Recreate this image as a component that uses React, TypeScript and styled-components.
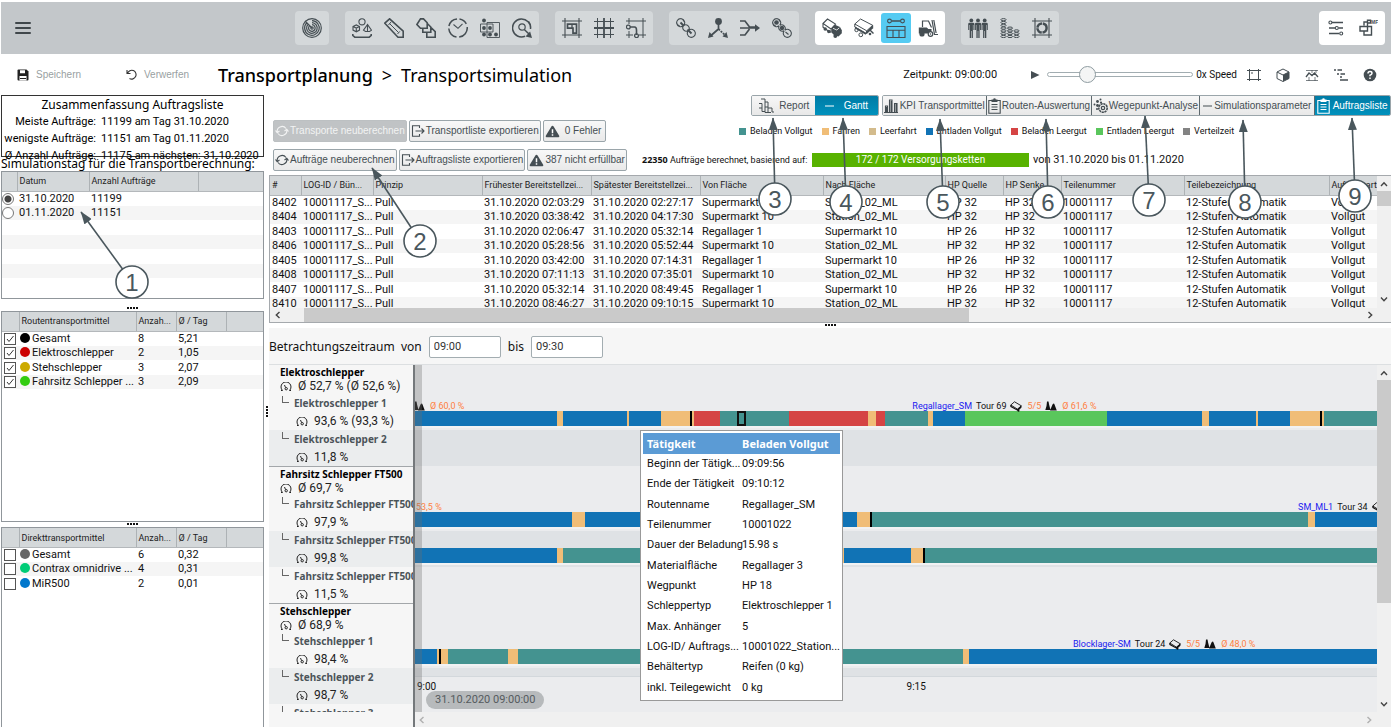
import React from "react";
import styled, { createGlobalStyle } from "styled-components";

const HEAD = `"Noto Sans", "Open Sans", sans-serif`;
const TEXT = `Roboto, "Noto Sans", sans-serif`;
const CTRL = `"Liberation Sans", Arial, sans-serif`;
const INK = "#454e53";

const COLORS = {
  load: "#449390",
  drive: "#f0bd77",
  empty: "#d3bb8c",
  unload: "#1173b5",
  loadEmpty: "#d54444",
  unloadEmpty: "#5ac65c",
  spread: "#838383",
  wait: "#000000",
};
type Kind = keyof typeof COLORS;

const Global = createGlobalStyle`
  *, *::before, *::after { box-sizing: border-box; }
  body { margin: 0; background: #fff; color: #111; font: 11px/14px ${TEXT}; }
  button, input { font-family: inherit; margin: 0; }
  svg { display: block; flex: none; }
`;

/* ---------- shell ---------- */

const Page = styled.div`
  position: relative;
  display: flex;
  flex-direction: column;
  height: 100vh;
  min-height: 600px;
  padding: 2px 1px 0;
  overflow: hidden;
`;

const TopBar = styled.header`
  display: flex;
  align-items: center;
  gap: 16px;
  height: 52px;
  flex: none;
  padding-right: 6px;
  background: #c3c7ca;
`;

const MenuButton = styled.button`
  display: flex;
  flex-direction: column;
  gap: 3px;
  width: 278px;
  padding: 0 0 0 14px;
  border: 0;
  background: none;
  cursor: pointer;
  &::before, &::after, span { content: ""; width: 16px; height: 2px; border-radius: 1px; background: #40474b; }
`;

const ToolGroup = styled.div<{ $light?: boolean; $end?: boolean }>`
  display: flex;
  padding: 1px;
  border-radius: 4px;
  background: ${(p) => (p.$light ? "#fff" : "#d4d8da")};
  ${(p) => p.$end && "margin-left: auto;"}
`;

const ToolButton = styled.button<{ $on?: boolean }>`
  display: grid;
  place-items: center;
  width: 32px;
  height: 32px;
  padding: 0;
  border: 1px solid transparent;
  border-radius: 4px;
  background: ${(p) => (p.$on ? "#55cbf2" : "none")};
  background-clip: padding-box;
  color: ${INK};
  cursor: pointer;
`;

const TitleRow = styled.div`
  display: flex;
  align-items: center;
  height: 41px;
  flex: none;
  padding-right: 14px;
`;

const GhostButton = styled.button<{ $width: number }>`
  display: flex;
  align-items: center;
  gap: 7px;
  width: ${(p) => p.$width}px;
  padding: 0;
  border: 0;
  background: none;
  color: #999fa2;
  font: 10px/14px ${CTRL};
  cursor: pointer;
`;

const SaveActions = styled.div`
  display: flex;
  width: 217px;
  padding-left: 16px;
`;

const PageTitle = styled.h1`
  display: flex;
  gap: 9px;
  margin: 0;
  font: 400 18px/24px ${HEAD};
  color: #000;
  b { font-weight: 500; }
`;

const SimControls = styled.div`
  display: flex;
  align-items: center;
  margin-left: auto;
`;

const SpeedValue = styled.span`
  font-size: 10px;
`;

const PlayButton = styled.button`
  width: 16px;
  margin: 0 0 0 34px;
  padding: 0;
  border: 0;
  background: none;
  color: ${INK};
  cursor: pointer;
`;

const Slider = styled.input`
  appearance: none;
  width: 146px;
  height: 18px;
  margin: 0 3px 0 0;
  background: none;
  &::-webkit-slider-runnable-track {
    height: 5px;
    border: 1px solid #a2adb1;
    border-radius: 3px;
    background: #fff;
  }
  &::-webkit-slider-thumb {
    appearance: none;
    width: 17px;
    height: 17px;
    margin-top: -7px;
    border: 1px solid #8f9ca1;
    border-radius: 50%;
    background: #f4f5f5;
  }
`;

const ViewIcons = styled.div`
  display: flex;
  gap: 15px;
  margin-left: 10px;
`;

const IconButton = styled.button`
  width: 14px;
  height: 14px;
  padding: 0;
  border: 0;
  background: none;
  color: ${INK};
  cursor: pointer;
`;

const Body = styled.div`
  display: flex;
  flex: 1;
  min-height: 0;
`;

const Sidebar = styled.aside`
  display: flex;
  flex-direction: column;
  width: 263px;
  flex: none;
`;

const Gutter = styled.div`
  display: grid;
  place-items: center;
  width: 5px;
  flex: none;
`;

const Main = styled.main`
  display: flex;
  flex-direction: column;
  flex: 1;
  min-width: 0;
`;

const Dots = styled.span<{ $vertical?: boolean }>`
  display: flex;
  flex-direction: ${(p) => (p.$vertical ? "column" : "row")};
  justify-content: center;
  gap: 1px;
  i { width: 2px; height: 2px; background: #111; }
`;

const Splitter = styled.div<{ $height: number }>`
  display: flex;
  align-items: flex-end;
  justify-content: center;
  height: ${(p) => p.$height}px;
  padding-bottom: 2px;
  flex: none;
`;

/* ---------- sidebar ---------- */

const Summary = styled.section`
  height: 62px;
  flex: none;
  border: 1px solid #333;
  color: #000;
`;

const SectionTitle = styled.h2<{ $center?: boolean }>`
  margin: 0;
  font: 400 12px/${(p) => (p.$center ? 17 : 14)}px ${HEAD};
  text-align: ${(p) => (p.$center ? "center" : "left")};
  white-space: nowrap;
  color: #000;
`;

const SummaryList = styled.dl`
  display: grid;
  grid-template-columns: 94px 1fr;
  column-gap: 5px;
  margin: 0;
  line-height: 17px;
  white-space: nowrap;
  dt { justify-self: end; }
  dd { margin: 0; }
`;

const Box = styled.div<{ $grow?: number; $open?: boolean }>`
  ${(p) => (p.$grow ? `flex: ${p.$grow} 1 0;` : "height: 128px; flex: none;")}
  min-height: 0;
  overflow: hidden;
  border: 1px solid #90969b;
  ${(p) => p.$open && "border-bottom: 0;"}
  background: #fff;
`;

const DataTable = styled.table`
  width: 100%;
  table-layout: fixed;
  border-collapse: collapse;
  white-space: nowrap;
  color: #111;
  th {
    height: 19px;
    padding: 0 0 0 2px;
    border-right: 1px solid #adb2b5;
    border-bottom: 1px solid #b4b8bb;
    background: #d4d8da;
    font-size: 9px;
    font-weight: 400;
    text-align: left;
    color: #222;
    overflow: hidden;
  }
  th:last-child { border-right: 0; }
  td {
    height: 15px;
    padding: 0 0 0 2px;
    line-height: 14px;
    overflow: hidden;
  }
  tbody tr:nth-child(even) td { height: 14px; }
  tbody tr:nth-child(even) { background: #f5f5f5; }
`;

const Radio = styled.input`
  appearance: none;
  display: block;
  width: 12px;
  height: 12px;
  margin-left: -2px;
  border: 1px solid #777;
  border-radius: 50%;
  background: #fff;
  &:checked { background: radial-gradient(circle, #444 0 3px, #fff 4px); }
`;

const Check = styled.input`
  appearance: none;
  display: block;
  width: 12px;
  height: 12px;
  border: 1px solid #555;
  background: #fff;
  &:checked {
    background: #fff url("data:image/svg+xml,%3Csvg xmlns='http://www.w3.org/2000/svg' viewBox='0 0 10 10'%3E%3Cpath d='M2 5l2 2.5L8.500 2' fill='none' stroke='%23333'/%3E%3C/svg%3E") center / 10px;
  }
`;

const Swatch = styled.span<{ $color: string }>`
  display: inline-block;
  width: 10px;
  height: 10px;
  margin: 0 2px 0 -1px;
  border-radius: 50%;
  background: ${(p) => p.$color};
  vertical-align: -1px;
`;

/* ---------- tabs, actions, legend ---------- */

const TabBar = styled.nav`
  display: flex;
  justify-content: flex-end;
  gap: 3px;
  flex: none;
  height: 21px;
`;

const TabGroup = styled.div`
  display: flex;
  border: 1px solid #9aa5aa;
  border-radius: 2px;
  overflow: hidden;
`;

const Tab = styled.button<{ $width: number; $on?: boolean; $bar?: boolean }>`
  display: flex;
  align-items: center;
  justify-content: space-evenly;
  width: ${(p) => p.$width}px;
  padding: 0;
  border: 0;
  border-right: ${(p) => (p.$bar ? "1px solid #5d686d" : "0")};
  background: ${(p) => (p.$on ? "linear-gradient(#007ba5, #0091bd)" : "linear-gradient(#f7f7f7, #e8e8e8)")};
  color: ${(p) => (p.$on ? "#fff" : INK)};
  font: 10px/18px ${CTRL};
  white-space: nowrap;
  cursor: pointer;
`;

const ActionRow = styled.div<{ $last?: boolean }>`
  display: flex;
  align-items: center;
  flex: none;
  height: 22px;
  margin: ${(p) => (p.$last ? "7px 0 4px" : "4px 0 0")};
  padding-left: 4px;
`;

const Actions = styled.div<{ $width: number }>`
  display: flex;
  gap: 2px;
  width: ${(p) => p.$width}px;
  flex: none;
`;

const ActionButton = styled.button<{ $wide?: boolean }>`
  display: flex;
  align-items: center;
  justify-content: center;
  gap: ${(p) => (p.$wide ? 5 : 1)}px;
  height: 22px;
  padding: 0 ${(p) => (p.$wide ? 4 : 1)}px 0 1px;
  border: 1px solid #9aa5aa;
  border-radius: 2px;
  background: linear-gradient(#f8f8f8, #e9e9e9);
  color: ${INK};
  font: 10px/18px ${CTRL};
  white-space: nowrap;
  cursor: pointer;
  &:disabled { border-color: #bcc0c2; background: #c0c3c5; color: #f2f3f3; }
`;

const Legend = styled.ul`
  display: flex;
  gap: 9px;
  margin: 0;
  padding: 0;
  list-style: none;
  font-size: 9px;
  white-space: nowrap;
`;

const LegendItem = styled.li<{ $color: string }>`
  display: flex;
  align-items: center;
  gap: 4px;
  &::before { content: ""; width: 7px; height: 7px; background: ${(p) => p.$color}; }
`;

const Basis = styled.span`
  width: 170px;
  flex: none;
  font-size: 9px;
  white-space: nowrap;
  b { font-family: ${HEAD}; }
`;

const Progress = styled.span`
  width: 217px;
  margin-right: 4px;
  background: #58b200;
  color: #fff;
  font-size: 10px;
  text-align: center;
`;

/* ---------- scrollable frames ---------- */

const OrderFrame = styled.section`
  display: grid;
  grid-template: 132px 14px / minmax(0, 1fr) 14px;
  flex: none;
  border: 1px solid #a5a9ad;
  border-width: 1px 0 1px 1px;
`;

const Clip = styled.div`
  overflow: hidden;
`;

const VScroll = styled.div<{ $span?: boolean }>`
  display: flex;
  flex-direction: column;
  background: #f0f0f0;
  color: #444;
  min-height: 0;
  ${(p) => p.$span && "grid-row: span 2;"}
`;

const HScroll = styled.div<{ $faint?: boolean }>`
  display: flex;
  height: ${(p) => (p.$faint ? 15 : 14)}px;
  background: #f0f0f0;
  color: ${(p) => (p.$faint ? "#b0b0b0" : "#444")};
`;

const Thumb = styled.div<{ $share: number }>`
  flex: ${(p) => p.$share} 1 0;
  background: #cacaca;
`;

const Track = styled.div<{ $share: number }>`
  flex: ${(p) => p.$share} 1 0;
`;

const ArrowBox = styled.span<{ $size: number }>`
  display: grid;
  place-items: center;
  flex: 0 0 ${(p) => p.$size}px;
`;

/* ---------- gantt ---------- */

const RangeBar = styled.form`
  display: flex;
  align-items: center;
  flex: none;
  height: 37px;
  padding-top: 1px;
  border-bottom: 1px solid #dcdfe1;
  background: #f6f6f6;
  font: 12px/16px ${HEAD};
`;

const TimeField = styled.input`
  width: 72px;
  height: 22px;
  margin: 0 7px;
  padding: 0 4px;
  border: 1px solid #a3adb1;
  border-radius: 2px;
  background: #fff;
  color: #333;
  font: 11px/14px ${TEXT};
`;

const Gantt = styled.section`
  display: grid;
  grid-template: minmax(0, 1fr) 15px / 144px 2px minmax(0, 1fr) 14px;
  flex: 1;
  min-height: 0;
  background: #f6f6f6;
`;

const Names = styled.div`
  overflow: hidden;
  background: #f6f6f6;
`;

const Divider = styled.div`
  grid-row: span 2;
  background: #74787b;
`;

const GroupHead = styled.div<{ $first?: boolean }>`
  height: 29px;
  padding-left: 11px;
  border-top: ${(p) => (p.$first ? "0" : "1px solid #a3a7aa")};
  white-space: nowrap;
  color: #222;
  b { display: block; height: 14px; font: bold 10px/14px ${HEAD}; color: #000; }
`;

const GroupSpace = styled.div`
  height: 29px;
`;

const Load = styled.span`
  display: flex;
  align-items: center;
  gap: 6px;
  font-size: 12px;
  line-height: 15px;
`;

const SubHead = styled.div<{ $alt?: boolean }>`
  height: 36px;
  padding: 2px 0 0 27px;
  background: ${(p) => (p.$alt ? "#ebedee" : "#f6f6f6")};
  white-space: nowrap;
  overflow: hidden;
  color: #222;
`;

const SubName = styled.div`
  display: flex;
  gap: 5px;
  margin-left: -14px;
  height: 18px;
  font: bold 10px/15px ${HEAD};
  color: #4b5459;
  &::before {
    content: "";
    flex: none;
    width: 7px;
    height: 7px;
    border: 1px solid #666;
    border-width: 0 0 1px 1px;
  }
`;

const Timeline = styled.div`
  position: relative;
  display: flex;
  flex-direction: column;
  min-height: 0;
  background: #ebecee;
`;

const Lanes = styled.div`
  position: relative;
  flex: 1;
  min-height: 0;
  overflow: hidden;
`;

const Lane = styled.div<{ $alt?: boolean }>`
  position: relative;
  height: 36px;
  padding-top: 17px;
  background: ${(p) => (p.$alt ? "#dfe2e5" : "#ebecee")};
`;

const Bar = styled.div`
  display: flex;
  height: 15px;
  box-shadow: 0 2px #f1f2f3;
`;

const Segment = styled.span<{ $w: number; $kind: Kind }>`
  flex: ${(p) => p.$w} 1 0;
  background: ${(p) => COLORS[p.$kind]};
`;

/* The selected activity lies over the lane's bar. */
const Selection = styled.span`
  position: absolute;
  top: 17px;
  left: 33.5%;
  width: 9px;
  height: 15px;
  border: 2px solid #111;
`;

const TourLabel = styled.span<{ $left: number }>`
  position: absolute;
  top: 5px;
  left: ${(p) => p.$left}%;
  display: flex;
  align-items: center;
  gap: 4px;
  font-size: 9px;
  white-space: nowrap;
  color: #111;
  a { color: #2020f0; text-decoration: none; }
  em { color: #ff7f3f; font-style: normal; }
  svg { margin-right: 1px; }
`;

const Axis = styled.div`
  position: relative;
  height: 36px;
  flex: none;
  border-top: 1px solid #d3d8dc;
  background: #ebecee;
  font-size: 10px;
`;

const Tick = styled.span<{ $left: number }>`
  position: absolute;
  top: 3px;
  left: ${(p) => p.$left}%;
`;

const NowPill = styled.span`
  position: absolute;
  left: 11px;
  top: 14px;
  padding: 0 9px;
  border-radius: 9px;
  background: #b7babc;
  color: #555b5e;
  font-size: 11px;
  line-height: 18px;
`;

const NowBand = styled.span`
  position: absolute;
  inset: 0 auto 0 0;
  width: 7px;
  background: rgba(110, 110, 110, 0.32);
`;

const Tooltip = styled.div`
  position: absolute;
  top: 65px;
  left: 23.4%;
  width: 203px;
  padding: 2px;
  border: 1px solid #999;
  background: #fff;
  table { width: 100%; height: 265px; table-layout: fixed; border-collapse: collapse; white-space: nowrap; }
  th { padding: 0 0 0 4px; font-weight: 400; text-align: left; }
  td { padding: 0; }
  thead th { height: 21px; background: #5b9bd5; color: #fff; font: bold 11px/20px ${HEAD}; }
  thead th + th { padding: 0; }
`;

/* ---------- callouts ---------- */

const Callouts = styled.svg`
  position: absolute;
  top: 0;
  left: 0;
  pointer-events: none;
  text { font: 24px ${CTRL}; text-anchor: middle; fill: #4a575d; }
`;

/* ---------- icons ---------- */

const Svg = ({ children, w = 20, h = 20, box, sw = 1.3 }: { children: React.ReactNode; w?: number; h?: number; box?: string; sw?: number }) => (
  <svg width={w} height={h} viewBox={box || `0 0 ${w} ${h}`} fill="none" stroke="currentColor" strokeWidth={sw} aria-hidden="true">
    {children}
  </svg>
);

const F = { fill: "currentColor", stroke: "none" };

const chain = (
  <path d="M7.800 7.200A4 4 0 1 0 7.200 7.800M7.200 7.800A3.700 3.700 0 0 0 12.200 12.800M7.800 7.200A3.700 3.700 0 0 1 12.800 12.200M12.200 12.800A4 4 0 1 0 12.800 12.200M4.500.5q2.300.2 3.800 3.300M.5 4.500q.2 2.300 3.300 3.800" />
);

const frame = <path d="M3 0v20M17 0v20M0 3h20M0 17h20" strokeWidth="1.100" />;

const coins = (x: number, n: number) =>
  Array.from({ length: n }, (_, i) => <ellipse key={`${x}-${i}`} cx={x} cy={18.500 - i * 2.800} rx="2.600" ry="1.100" />);

const icons: Record<string, React.ReactNode> = {
  radar: (
    <Svg sw={1.2}>
      <circle cx="10" cy="10" r="9.300" />
      <path d="M4.800 4.800a7.300 7.300 0 1 0 5.200-2.100M6.200 6.200a5.300 5.300 0 1 0 3.800-1.500M7.600 7.600A3.300 3.300 0 1 0 10 6.700M3 3l7 7" />
      <circle cx="10" cy="10" r="1.200" />
    </Svg>
  ),
  shapes: (
    <Svg sw={1.1}>
      <circle cx="10" cy="3.800" r="3.100" />
      <path d="M1 8.500l3.300-1.600 3.200 1.600v3.600l-3.200 1.700L1 12.100zM1 8.500l3.300 1.600 3.200-1.600M4.300 10.100v3.700M15.500 6.500l-4 5.700 2 1.300h4l2-1.300zM15.500 6.500v7" />
      <path d="M.8 16v1.500l2 1.700h14.400l2-1.700V16" strokeWidth="1.600" />
    </Svg>
  ),
  ruler: (
    <Svg>
      <path d="M.8 5.200L5.600.8l13.600 12.400v6H14z" strokeWidth="1.600" />
      <path d="M5.500 5.500l9 9M4.500 7l2.500-3M13.500 16l2.300-2.600" strokeWidth="1" />
    </Svg>
  ),
  layers: (
    <Svg sw={1.6}>
      <path d="M.9 6.500L4.500.9h3l3.700 3.900v5.500H4.500z" />
      <path d="M6.800 10.500v3.700h8V9l-3.500-3.500M10.800 15v4.200h8.400v-5.500l-4.200-4.200" />
    </Svg>
  ),
  clock: (
    <Svg sw={1.5}>
      <path d="M11.500.9a9.200 9.200 0 0 1 6.800 5M19.200 9a9.200 9.200 0 0 1-8 10.100M8.500 19.100A9.200 9.200 0 0 1 .8 10.500M.9 8A9.200 9.200 0 0 1 9 .9" />
      <path d="M5.500 6.500l4.500 3.800 4.500-4.500" strokeWidth="1.100" />
    </Svg>
  ),
  dots: (
    <Svg sw={0.9}>
      <path d="M.5 6h12.500v8H.5zM7 4.500h12.500v15H7z" />
      <g {...F}>
        {[[4, 2.500], [4, 10], [10, 10], [4, 16.500], [10, 16.500], [16, 16.500]].map(([x, y]) => <circle key={`${x}-${y}`} cx={x} cy={y} r="1.900" />)}
      </g>
    </Svg>
  ),
  target: (
    <Svg sw={1.5}>
      <path d="M18.500 11A9 9 0 1 0 13 18.300M16.500 3.500a9 9 0 0 1 2.200 6" />
      <circle cx="10" cy="9" r="3.200" strokeWidth="1.200" />
      <path d="M12.300 11.500L17 16" />
      <path d="M20 20l-6.500-1.600 4.600-5z" {...F} />
    </Svg>
  ),
  layout: <Svg>{frame}<path d="M5.500 6.200h9v9H11v-5H5.500z" strokeWidth="1.700" /><path d="M10 6.200v4" /></Svg>,
  grid: <Svg sw={1.2}><path d="M3.500 0v20M16.500 0v20M0 3.500h20M0 16.500h20" strokeWidth="1" /><path d="M10 0v20M0 10h20" strokeWidth="1.800" /></Svg>,
  route: (
    <Svg>
      <path d="M3 0v6M17 0v20M0 3h20M3 13v7M0 17h7M13 17h7" strokeWidth="1" />
      <path d="M4 9h4.500q2 0 2 3v5" strokeWidth="1.600" />
      <circle cx="2.300" cy="9" r="1.900" /><circle cx="10.500" cy="17.700" r="1.900" />
    </Svg>
  ),
  chain: <Svg sw={1.1}>{chain}<path d="M4.500 4.500l3.500 3.500M11.500 11.500l4 4" strokeWidth="1.900" /></Svg>,
  split: (
    <Svg sw={1.7}>
      <circle cx="10.500" cy="3.500" r="3.400" {...F} />
      <path d="M10.500 5v6L3 17.500" /><path d="M10.500 11l7 6.500" strokeDasharray="2 1" />
      <path d="M0 20l1.500-6 4 4.600zM20 20l-1.500-6-4 4.600z" {...F} />
    </Svg>
  ),
  merge: <Svg sw={1.7}><path d="M0 3h5l4.500 6h6M0 17h5l4.500-6M0 10h16" /><path d="M20 10l-5-3.800v7.600z" {...F} /></Svg>,
  chainDots: <Svg sw={1.1}>{chain}<circle cx="4.500" cy="4.500" r="2.300" {...F} /><circle cx="10" cy="10" r="2.200" {...F} /><path d="M13.500 14l3 2.500" /></Svg>,
  truck: (
    <Svg sw={1.1}>
      <path d="M1 5.500L5.500 1l8 5-4.500 5zM1 5.500v3.800l7.500 5.200M9 11v3.500" />
      <path d="M9.500 10.500l3.500-3.700 5 2.200 1.800 3.200v3l-3.300 3.300-4-1-3-3z" {...F} />
      <path d="M11 10.300l3.800 1.700 2.500-2.200" stroke="#fff" strokeWidth=".8" />
      <circle cx="3.200" cy="11" r="1.700" {...F} /><circle cx="6.800" cy="13.500" r="1.700" {...F} /><circle cx="13.300" cy="18" r="1.900" {...F} />
    </Svg>
  ),
  trailer: (
    <Svg sw={1}>
      <path d="M.8 6L6.500 1l12.200 6.300-6 5.500zM.8 6v3l11.700 6.500v-2.700M18.700 7.300v3.200" />
      <path d="M12.500 13.300l6.300-6v3.200l-6 5.500zM17 12l3 3-1 1-3-3z" {...F} />
      <circle cx="2.500" cy="12" r="1.700" /><circle cx="6.800" cy="16.800" r="1.900" /><circle cx="16" cy="16" r="1.300" {...F} />
      <path d="M1 9.500l11 6.500" strokeWidth="1.500" />
    </Svg>
  ),
  plan: (
    <Svg sw={1.1}>
      <circle cx="3.500" cy="3" r="1.900" /><circle cx="16.500" cy="3" r="1.900" />
      <path d="M5.500 3h9" strokeWidth="1.500" /><path d="M1 8.500h18v11H1zM1 12.300h18M7 12.300v7.200M13 12.300v7.200" />
    </Svg>
  ),
  forklift: (
    <Svg sw={1.2}>
      <path d="M4.500 9V3h6l3 6.500" /><path d="M14 2l2.500 14.500H20M15.800 2l2.300 13" />
      <path d="M.8 9.500h8l1.500 1.500h3.200v4.500H.8z" {...F} />
      <circle cx="4" cy="16" r="2.600" {...F} /><circle cx="12.500" cy="16" r="2.300" fill="#fff" /><circle cx="12.500" cy="16" r=".8" {...F} />
    </Svg>
  ),
  people: (
    <Svg>
      <g {...F}>
        {[3.300, 16.700, 10].map((x) => (
          <React.Fragment key={x}>
            <circle cx={x} cy="2.400" r="1.900" />
            <path d={`M${x - 3.100} 6q0-1.200 1.500-1.200h3.200q1.500 0 1.500 1.200v6h-1v-5h-.5V20h-1.300v-7h-.6v7h-1.300V7h-.5v5h-1z`} />
          </React.Fragment>
        ))}
      </g>
    </Svg>
  ),
  coins: (
    <Svg sw={1}>
      {coins(3.500, 7).map((c) => c)}
      {coins(10, 4)}
      {coins(16.500, 3)}
    </Svg>
  ),
  zone: <Svg>{frame}<circle cx="10" cy="10" r="4.600" strokeWidth="2.500" strokeDasharray="6.500 .8" /></Svg>,
  sliders: (
    <Svg w={16} h={16} sw={1.5}>
      <path d="M4 2.500h11M1 8h6M10.500 8H15M1 13.500h10" />
      <g strokeWidth="1.100"><circle cx="2.400" cy="2.500" r="1.500" /><circle cx="8.800" cy="8" r="1.500" /><circle cx="13.200" cy="13.500" r="1.500" /></g>
    </Svg>
  ),
  mf: (
    <Svg w={20} h={18} sw={1.4}>
      <path d="M6 6.500V3h3.500v9H2V7.500h11.500V16H6v-4M9.500 4V1.200h3V4z" />
      <text x="13" y="5" fill="currentColor" stroke="none" fontSize="5" fontWeight="bold" fontFamily="Liberation Sans, Arial, sans-serif">MF</text>
    </Svg>
  ),
};

const Gauge = () => (
  <Svg w={12} h={10} sw={1}>
    <path d="M2.500 8.500A5 5 0 1 1 9.500 8.500M1 8.500h1.500M11 8.500H9.500" />
    <path d="M4.500 3l1 2.500" /><circle cx="6.200" cy="6.700" r="1.200" />
  </Svg>
);

const Chevron = ({ dir }: { dir: "up" | "down" | "left" | "right" }) => {
  const d = { up: "M1 6l3-3.200L7 6", down: "M1 2.500l3 3.200 3-3.200", left: "M5.500 1l-3.200 3 3.200 3", right: "M2.500 1l3.200 3-3.200 3" }[dir];
  return <Svg w={8} h={8} sw={1.4}><path d={d} /></Svg>;
};

const RefreshIcon = () => (
  <Svg w={14} h={14} sw={1.1}>
    <path d="M2.300 8.500A4.900 4.900 0 0 1 11 4.500M11.700 5.500A4.900 4.900 0 0 1 3 9.500M.5 6.500l1.700 2.200L4.500 7M13.500 7.500l-1.700-2.200L9.500 7" />
  </Svg>
);
const ExportIcon = () => <Svg w={14} h={14} sw={1.1}><path d="M8.500 4V1.700H1.500v10.600h7V10M4.500 7h8.500M10.500 4.500L13 7l-2.500 2.500" /></Svg>;
const WarnIcon = () => (
  <Svg w={15} h={13} box="0 0 16 14">
    <path d="M8 .8q.8 0 1.200.8l6 10q.6 1.600-1 1.700H1.800q-1.600-.1-1-1.700l6-10Q7.200.8 8 .8z" {...F} />
    <path d="M8 4.500v4.300M8 10v1.600" stroke="#fff" strokeWidth="1.600" />
  </Svg>
);
const StairsIcon = () => <Svg w={16} h={16} sw={1}><path d="M3 1h4v3h3v6h4v4h2M1 5.500h3v8h3M1 10h3M7 4v5h3M7 9v5.500h6M10 10v5" /></Svg>;
const DashIcon = () => <Svg w={9} h={10} sw={1.2}><path d="M0 5h9" /></Svg>;
const ChartIcon = () => <Svg w={14} h={14} sw={1.1}><path d="M0 13.500h14M1.500 13V7h2v6M5.500 13V1h2.500v12M10.500 13V4.500h2.500V13" /><path d="M2 8h1.500v5H2zM6.500 2H8v11H6.500zM11.500 5H13v8h-1.500z" {...F} /></Svg>;
const ClipboardIcon = () => (
  <Svg w={13} h={16} sw={1.1}>
    <path d="M.8 2.500h11.400v12.700H.8zM3.500 6.500h6M3.500 9h6M3.500 11.500h6" /><path d="M3.500 1.500h1.700a1.300 1.300 0 0 1 2.600 0h1.700V4h-6z" {...F} />
  </Svg>
);
const WaypointIcon = () => (
  <Svg w={15} h={15} sw={1.2}>
    <circle cx="10" cy="10" r="4.200" strokeDasharray="2.200 .6" strokeWidth="1.600" /><circle cx="10" cy="10" r="1.700" />
    <g {...F}><circle cx="1.500" cy="6.500" r="1" /><circle cx="4.500" cy="3.500" r="1.400" /><circle cx="4.500" cy="7.500" r="1.400" /><circle cx="7.500" cy="1.500" r="1" /><circle cx="8" cy="4.500" r="1.100" /><circle cx="4" cy="11" r="1" /></g>
  </Svg>
);
const SaveIcon = () => (
  <Svg w={12} h={12}><path d="M.5 1.500q0-1 1-1h8l2 2v8q0 1-1 1h-9q-1 0-1-1z" fill="#222" stroke="none" /><path d="M3 1.200h5v3H3zM2.500 7h7v4.500h-7z" fill="#fff" stroke="none" /><path d="M3 9.500h6" stroke="#222" strokeWidth="1" /></Svg>
);
const UndoIcon = () => <Svg w={11} h={11} sw={1.1}><path d="M1 1v3.500h3.500M1.500 4.200A4.400 4.400 0 1 1 3.500 9.500" stroke="#333" /></Svg>;

const ToteIcon = () => (
  <Svg w={12} h={11} sw={0.9}><path d="M.8 4L4.500.8l6.800 4-3.800 3.400zM.8 4v1.500" /><path d="M.5 4.500l6.500 3.800 4.500-3.800v2L8 10 .5 6z" {...F} /><circle cx="8.500" cy="9.800" r="1" {...F} /></Svg>
);
const WeightIcon = () => (
  <Svg w={12} h={10}><path d="M2 .5h1.500l.7 3.500L5.500 9H.3L1.500 5zM7.500 3.500q1.500-2 2 0L11.800 9.500H5z" {...F} /></Svg>
);

/* ---------- data ---------- */

const toolGroups: { names: [string, string][]; light?: boolean }[] = [
  { names: [["radar", "Übersicht"]] },
  { names: [["shapes", "Objekte"], ["ruler", "Maße"], ["layers", "Ebenen"], ["clock", "Zeiten"], ["dots", "Raster"], ["target", "Ziel"]] },
  { names: [["layout", "Layout"], ["grid", "Gitter"], ["route", "Wege"]] },
  { names: [["chain", "Kette"], ["split", "Verteilen"], ["merge", "Zusammenführen"], ["chainDots", "Kettenglieder"]] },
  { names: [["truck", "Routenzug"], ["trailer", "Anhänger"], ["plan", "Transportsimulation"], ["forklift", "Stapler"]], light: true },
  { names: [["people", "Personal"], ["coins", "Kosten"], ["zone", "Zonen"]] },
];

const legend: [string, Kind][] = [
  ["Beladen Vollgut", "load"], ["Fahren", "drive"], ["Leerfahrt", "empty"], ["Entladen Vollgut", "unload"],
  ["Beladen Leergut", "loadEmpty"], ["Entladen Leergut", "unloadEmpty"], ["Verteilzeit", "spread"],
];

const columns: [string, number?][] = [
  ["#", 31], ["LOG-ID / Bün...", 72], ["Prinzip", 109], ["Frühester Bereitstellzei...", 109], ["Spätester Bereitstellzei...", 109],
  ["Von Fläche", 123], ["Nach Fläche", 122], ["HP Quelle", 58], ["HP Senke", 58], ["Teilenummer", 123], ["Teilebezeichnung", 145], ["Auftragsart"],
];

const orders: [string, string, string, boolean][] = [
  ["8402", "02:03:29", "02:27:17", true],
  ["8404", "03:38:42", "04:17:30", true],
  ["8403", "02:06:47", "05:32:14", false],
  ["8406", "05:28:56", "05:52:44", true],
  ["8405", "03:42:00", "07:14:31", false],
  ["8408", "07:11:13", "07:35:01", true],
  ["8407", "05:32:14", "08:49:45", false],
  ["8410", "08:46:27", "09:10:15", true],
];

type Vehicle = [string, string, string, string];
const routeVehicles: Vehicle[] = [
  ["#000", "Gesamt", "8", "5,21"], ["#cc0000", "Elektroschlepper", "2", "1,05"],
  ["#ccaa00", "Stehschlepper", "3", "2,07"], ["#33cc11", "Fahrsitz Schlepper ...", "3", "2,09"],
];
const directVehicles: Vehicle[] = [
  ["#666", "Gesamt", "6", "0,32"], ["#00cc77", "Contrax omnidrive ...", "4", "0,31"], ["#0077cc", "MiR500", "2", "0,01"],
];

interface Tour { left: number; name?: string; tour?: string; fill?: string; load?: string; tote?: boolean; weight?: boolean }
interface Sub { name: string; load: string; alt?: boolean; bar?: [number, Kind][]; tours?: Tour[]; selected?: boolean }

const groups: { name: string; load: string; subs: Sub[] }[] = [
  {
    name: "Elektroschlepper", load: "Ø 52,7 % (Ø 52,6 %)",
    subs: [
      {
        name: "Elektroschlepper 1", load: "93,6 % (93,3 %)", selected: true,
        bar: [
          [142, "unload"], [6, "drive"], [64, "unload"], [2, "drive"], [32, "unload"], [29, "drive"], [2, "wait"], [2, "drive"],
          [26, "loadEmpty"], [69, "load"], [79, "loadEmpty"], [8, "drive"], [9, "loadEmpty"], [43, "load"], [5, "drive"], [32, "unload"],
          [142, "unloadEmpty"], [95, "unload"], [7, "drive"], [47, "unload"], [2, "drive"], [32, "unload"], [30, "drive"], [2, "wait"], [2, "drive"], [53, "load"],
        ],
        tours: [
          { left: -0.2, weight: true, load: "Ø 60,0 %" },
          { left: 51.7, name: "Regallager_SM", tour: "Tour 69", tote: true, fill: "5/5", weight: true, load: "Ø 61,6 %" },
        ],
      },
      { name: "Elektroschlepper 2", load: "11,8 %", alt: true },
    ],
  },
  {
    name: "Fahrsitz Schlepper FT500", load: "Ø 69,7 %",
    subs: [
      {
        name: "Fahrsitz Schlepper FT500", load: "97,9 %",
        bar: [[157, "unload"], [13, "drive"], [272, "unload"], [13, "drive"], [2, "wait"], [435, "load"], [7, "drive"], [62, "unload"]],
        tours: [{ left: 0.1, load: "53,5 %" }, { left: 91.8, name: "SM_ML1", tour: "Tour 34", tote: true }],
      },
      {
        name: "Fahrsitz Schlepper FT500", load: "99,8 %", alt: true,
        bar: [[142, "unload"], [6, "drive"], [280, "load"], [1, "drive"], [66, "unload"], [12, "drive"], [2, "wait"], [452, "load"]],
      },
      { name: "Fahrsitz Schlepper FT500", load: "11,5 %" },
    ],
  },
  {
    name: "Stehschlepper", load: "Ø 68,9 %",
    subs: [
      {
        name: "Stehschlepper 1", load: "98,4 %",
        bar: [[22, "unload"], [2, "drive"], [2, "wait"], [7, "drive"], [60, "load"], [10, "drive"], [444, "load"], [6, "drive"], [408, "unload"]],
        tours: [{ left: 68.4, name: "Blocklager-SM", tour: "Tour 24", tote: true, fill: "5/5", weight: true, load: "Ø 48,0 %" }],
      },
      { name: "Stehschlepper 2", load: "98,7 %", alt: true },
      { name: "Stehschlepper 3", load: "" },
    ],
  },
];

const details: [string, string][] = [
  ["Beginn der Tätigk...", "09:09:56"], ["Ende der Tätigkeit", "09:10:12"], ["Routenname", "Regallager_SM"], ["Teilenummer", "10001022"],
  ["Dauer der Beladung", "15.98 s"], ["Materialfläche", "Regallager 3"], ["Wegpunkt", "HP 18"], ["Schleppertyp", "Elektroschlepper 1"],
  ["Max. Anhänger", "5"], ["LOG-ID/ Auftrags...", "10001022_Station..."], ["Behältertyp", "Reifen (0 kg)"], ["inkl. Teilegewicht", "0 kg"],
];

/* circle centre followed by the arrow's tip */
const callouts = [
  [132, 282, 81, 212], [420, 241, 372, 168], [775, 199, 773, 118], [846, 202, 843, 118], [943, 202, 940, 119],
  [1048, 202, 1046, 119], [1149, 200, 1145, 116], [1245, 202, 1243, 120], [1355, 196, 1352, 118],
];

/* ---------- parts ---------- */

const Grip = ({ vertical }: { vertical?: boolean }) => <Dots $vertical={vertical}><i /><i /><i /><i /></Dots>;

const VehicleTable = ({ title, rows, checked }: { title: string; rows: Vehicle[]; checked: boolean }) => (
  <DataTable>
    <colgroup><col width="17" /><col width="117" /><col width="40" /><col width="50" /><col /></colgroup>
    <thead><tr><th /><th>{title}</th><th>Anzah...</th><th>Ø / Tag</th><th /></tr></thead>
    <tbody>
      {rows.map(([color, name, count, avg]) => (
        <tr key={name}>
          <td><Check type="checkbox" defaultChecked={checked} aria-label={name} /></td>
          <td><Swatch $color={color} />{name}</td>
          <td>{count}</td><td>{avg}</td><td />
        </tr>
      ))}
    </tbody>
  </DataTable>
);

const TourText = ({ t }: { t: Tour }) => (
  <TourLabel $left={t.left}>
    {t.name && <a href="#tour">{t.name}</a>}
    {t.tour && <span>{t.tour}</span>}
    {t.tote && <ToteIcon />}
    {t.fill && <em>{t.fill}</em>}
    {t.weight && <WeightIcon />}
    {t.load && <em>{t.load}</em>}
  </TourLabel>
);

export default function App() {
  return (
    <Page>
      <Global />
      <TopBar>
        <MenuButton aria-label="Menü"><span /></MenuButton>
        {toolGroups.map((g, i) => (
          <ToolGroup key={i} $light={g.light}>
            {g.names.map(([id, label]) => <ToolButton key={id} aria-label={label} $on={id === "plan"}>{icons[id]}</ToolButton>)}
          </ToolGroup>
        ))}
        <ToolGroup $light $end>
          <ToolButton aria-label="Einstellungen">{icons.sliders}</ToolButton>
          <ToolButton aria-label="MF">{icons.mf}</ToolButton>
        </ToolGroup>
      </TopBar>

      <TitleRow>
        <SaveActions>
          <GhostButton $width={109}><SaveIcon />Speichern</GhostButton>
          <GhostButton $width={70}><UndoIcon />Verwerfen</GhostButton>
        </SaveActions>
        <PageTitle><b>Transportplanung</b><span>&gt;</span><span>Transportsimulation</span></PageTitle>
        <SimControls>
          <span>Zeitpunkt: 09:00:00</span>
          <PlayButton aria-label="Start"><Svg w={9} h={8}><path d="M0 0l8.500 4L0 8z" {...F} /></Svg></PlayButton>
          <Slider type="range" min={0} max={100} defaultValue={24} aria-label="Speed" />
          <SpeedValue>0x Speed</SpeedValue>
          <ViewIcons>
            <IconButton aria-label="Rahmen"><Svg w={14} h={14} sw={1}><path d="M2.500 1v12M11.500 1v12M0 2.500h14M0 11.500h14M5 4v2" /></Svg></IconButton>
            <IconButton aria-label="3D"><Svg w={14} h={14} sw={1}><path d="M1 4l6-3 6 3v6.500L7 13.500l-6-3zM1 4l6 3 6-3" /><path d="M7 7l6-3v6.500l-6 3z" {...F} /></Svg></IconButton>
            <IconButton aria-label="Diagramm"><Svg w={14} h={14} sw={1.3}><path d="M1 9l3-4 3 2.500L9.500 5 13 9" /><path d="M1 2.500h12M1 12.500h12M4 9v4M10 9v4M7 2v3M11 2v3" strokeWidth=".7" /></Svg></IconButton>
            <IconButton aria-label="Gliederung"><Svg w={14} h={14} sw={1.3}><path d="M0 2h2M3.500 2H8M3 6h2M6.500 6H11M6 9h2M6 12h8" /></Svg></IconButton>
            <IconButton aria-label="Hilfe"><Svg w={14} h={14} sw={1.5}><circle cx="7" cy="7" r="6.300" {...F} /><path d="M5 5.500q0-2 2-2t2 1.700Q9 6.300 7 7.200v1M7 9.500V11" stroke="#fff" /></Svg></IconButton>
          </ViewIcons>
        </SimControls>
      </TitleRow>

      <Body>
        <Sidebar>
          <Summary>
            <SectionTitle $center>Zusammenfassung Auftragsliste</SectionTitle>
            <SummaryList>
              <dt>Meiste Aufträge:</dt><dd>11199 am Tag 31.10.2020</dd>
              <dt>wenigste Aufträge:</dt><dd>11151 am Tag 01.11.2020</dd>
              <dt>Ø Anzahl Aufträge:</dt><dd>11175 am nächsten: 31.10.2020</dd>
            </SummaryList>
          </Summary>
          <SectionTitle>Simulationstag für die Transportberechnung:</SectionTitle>
          <Box>
            <DataTable>
              <colgroup><col width="15" /><col width="72" /><col width="109" /><col /></colgroup>
              <thead><tr><th /><th>Datum</th><th>Anzahl Aufträge</th><th /></tr></thead>
              <tbody>
                <tr><td><Radio type="radio" name="day" defaultChecked aria-label="31.10.2020" /></td><td>31.10.2020</td><td>11199</td><td /></tr>
                <tr><td><Radio type="radio" name="day" aria-label="01.11.2020" /></td><td>01.11.2020</td><td>11151</td><td /></tr>
                {[0, 1, 2, 3].map((i) => <tr key={i}><td colSpan={4} /></tr>)}
              </tbody>
            </DataTable>
          </Box>
          <Splitter $height={12}><Grip /></Splitter>
          <Box $grow={211}><VehicleTable title="Routentransportmittel" rows={routeVehicles} checked /></Box>
          <Splitter $height={5}><Grip /></Splitter>
          <Box $grow={200} $open><VehicleTable title="Direkttransportmittel" rows={directVehicles} checked={false} /></Box>
        </Sidebar>

        <Gutter><Grip vertical /></Gutter>

        <Main>
          <TabBar>
            <TabGroup>
              <Tab $width={63}><StairsIcon />Report</Tab>
              <Tab $width={63} $on><DashIcon />Gantt</Tab>
            </TabGroup>
            <TabGroup>
              <Tab $width={104} $bar><ChartIcon />KPI Transportmittel</Tab>
              <Tab $width={105} $bar><ClipboardIcon />Routen-Auswertung</Tab>
              <Tab $width={108} $bar><WaypointIcon />Wegepunkt-Analyse</Tab>
              <Tab $width={115} $bar><DashIcon />Simulationsparameter</Tab>
              <Tab $width={75} $on><ClipboardIcon />Auftragsliste</Tab>
            </TabGroup>
          </TabBar>

          <ActionRow>
            <Actions $width={466}>
              <ActionButton disabled><RefreshIcon />Transporte neuberechnen</ActionButton>
              <ActionButton><ExportIcon />Transportliste exportieren</ActionButton>
              <ActionButton $wide><WarnIcon />0 Fehler</ActionButton>
            </Actions>
            <Legend>{legend.map(([name, kind]) => <LegendItem key={name} $color={COLORS[kind]}>{name}</LegendItem>)}</Legend>
          </ActionRow>
          <ActionRow $last>
            <Actions $width={369}>
              <ActionButton><RefreshIcon />Aufträge neuberechnen</ActionButton>
              <ActionButton><ExportIcon />Auftragsliste exportieren</ActionButton>
              <ActionButton><WarnIcon />387 nicht erfüllbar</ActionButton>
            </Actions>
            <Basis><b>22350</b> Aufträge berechnet, basierend auf:</Basis>
            <Progress>172 / 172 Versorgungsketten</Progress>
            <span>von 31.10.2020 bis 01.11.2020</span>
          </ActionRow>

          <OrderFrame>
            <Clip>
              <DataTable>
                <colgroup>{columns.map(([name, w]) => <col key={name} width={w} />)}</colgroup>
                <thead><tr>{columns.map(([name]) => <th key={name}>{name}</th>)}</tr></thead>
                <tbody>
                  {orders.map(([id, early, late, market]) => (
                    <tr key={id}>
                      <td>{id}</td><td>10001117_S...</td><td>Pull</td><td>31.10.2020 {early}</td><td>31.10.2020 {late}</td>
                      <td>{market ? "Supermarkt 10" : "Regallager 1"}</td><td>{market ? "Station_02_ML" : "Supermarkt 10"}</td>
                      <td>{market ? "HP 32" : "HP 26"}</td><td>HP 32</td><td>10001117</td><td>12-Stufen Automatik</td><td>Vollgut</td>
                    </tr>
                  ))}
                </tbody>
              </DataTable>
            </Clip>
            <VScroll $span>
              <ArrowBox $size={15}><Chevron dir="up" /></ArrowBox>
              <Thumb $share={15} /><Track $share={86} />
              <ArrowBox $size={14}><Chevron dir="down" /></ArrowBox>
              <ArrowBox $size={16} />
            </VScroll>
            <HScroll>
              <ArrowBox $size={15}><Chevron dir="left" /></ArrowBox>
              <ArrowBox $size={19} />
              <Thumb $share={664} /><Track $share={393} />
              <ArrowBox $size={15}><Chevron dir="right" /></ArrowBox>
            </HScroll>
          </OrderFrame>
          <Splitter $height={5}><Grip /></Splitter>

          <RangeBar>
            <label htmlFor="from">Betrachtungszeitraum&nbsp; von</label>
            <TimeField id="from" defaultValue="09:00" />
            <label htmlFor="to">bis</label>
            <TimeField id="to" defaultValue="09:30" />
          </RangeBar>

          <Gantt>
            <Names>
              {groups.map((g, i) => (
                <React.Fragment key={g.name}>
                  <GroupHead $first={i === 0}><b>{g.name}</b><Load><Gauge />{g.load}</Load></GroupHead>
                  {g.subs.map((s, n) => (
                    <SubHead key={n} $alt={s.alt}>
                      <SubName>{s.name}</SubName>
                      {s.load && <Load><Gauge />{s.load}</Load>}
                    </SubHead>
                  ))}
                </React.Fragment>
              ))}
            </Names>
            <Divider />
            <Timeline>
              <Lanes>
                {groups.map((g) => (
                  <React.Fragment key={g.name}>
                    <GroupSpace />
                    {g.subs.map((s, n) => (
                      <Lane key={n} $alt={s.alt}>
                        {s.tours?.map((t) => <TourText key={t.left} t={t} />)}
                        {s.bar && <Bar>{s.bar.map(([w, kind], i) => <Segment key={i} $w={w} $kind={kind} />)}</Bar>}
                        {s.selected && <Selection />}
                      </Lane>
                    ))}
                  </React.Fragment>
                ))}
              </Lanes>
              <Axis>
                <Tick $left={0.2}>9:00</Tick>
                <Tick $left={51.1}>9:15</Tick>
                <NowPill>31.10.2020 09:00:00</NowPill>
              </Axis>
              <NowBand />
              <Tooltip role="tooltip">
                <table>
                  <colgroup><col width="99" /><col /></colgroup>
                  <thead><tr><th>Tätigkeit</th><th>Beladen Vollgut</th></tr></thead>
                  <tbody>{details.map(([k, v]) => <tr key={k}><th scope="row">{k}</th><td>{v}</td></tr>)}</tbody>
                </table>
              </Tooltip>
            </Timeline>
            <VScroll>
              <ArrowBox $size={15}><Chevron dir="up" /></ArrowBox>
              <Thumb $share={223} /><Track $share={92} />
              <ArrowBox $size={17}><Chevron dir="down" /></ArrowBox>
            </VScroll>
            <span />
            <HScroll $faint>
              <ArrowBox $size={14}><Chevron dir="left" /></ArrowBox>
              <Track $share={1} />
              <ArrowBox $size={16}><Chevron dir="right" /></ArrowBox>
            </HScroll>
            <HScroll $faint />
          </Gantt>
        </Main>
      </Body>

      <Callouts width="1392" height="727" viewBox="0 0 1392 727" aria-hidden="true">
        <defs>
          <marker id="tip" markerUnits="userSpaceOnUse" markerWidth="13" markerHeight="9" refX="12" refY="4.500" orient="auto">
            <path d="M0 0l12.500 4.500L0 9z" fill="#4a575d" />
          </marker>
        </defs>
        {callouts.map(([cx, cy, x, y], i) => (
          <g key={i} stroke="#4a575d" strokeWidth="1.600">
            <line x1={cx} y1={cy} x2={x} y2={y} markerEnd="url(#tip)" />
            <circle cx={cx} cy={cy} r="16" fill="#fff" />
            <text x={cx} y={cy + 9} stroke="none">{i + 1}</text>
          </g>
        ))}
      </Callouts>
    </Page>
  );
}
